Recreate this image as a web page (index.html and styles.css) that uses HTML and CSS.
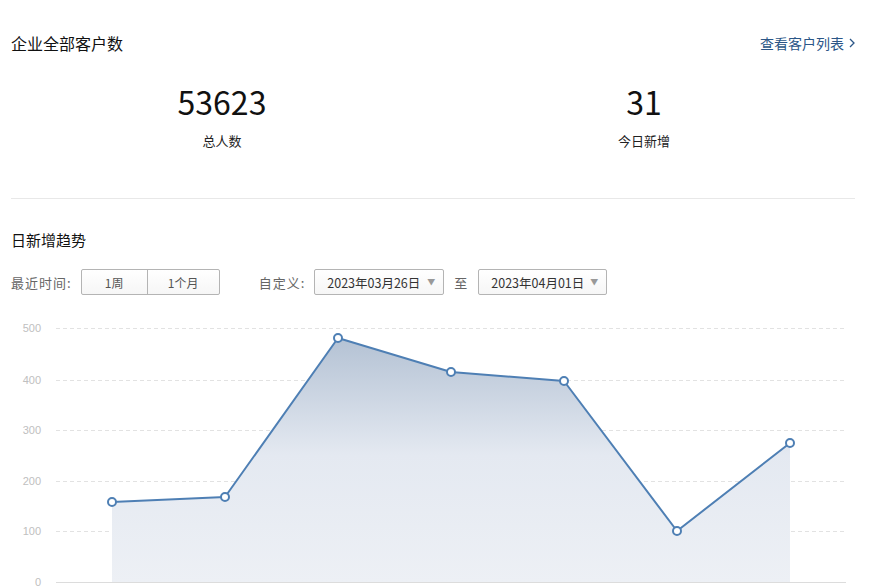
FILE: index.html
```html
<!DOCTYPE html>
<html lang="zh-CN">
<head>
<meta charset="utf-8">
<title>企业全部客户数</title>
<link rel="stylesheet" href="styles.css">
</head>
<body>
<div class="page">
  <div class="header">
    <div class="title">企业全部客户数</div>
    <a class="link" href="#">查看客户列表<svg class="chev" width="8" height="12" viewBox="0 0 8 12"><path d="M2 2 L6 6 L2 10" fill="none" stroke="#2b5687" stroke-width="1.3"/></svg></a>
  </div>
  <div class="stats">
    <div class="stat"><div class="num">53623</div><div class="lbl">总人数</div></div>
    <div class="stat"><div class="num">31</div><div class="lbl">今日新增</div></div>
  </div>
  <div class="divider"></div>
  <div class="sub">日新增趋势</div>
  <div class="filters">
    <span class="flabel">最近时间:</span>
    <div class="btns"><span class="btn b1">1周</span><span class="btn b2">1个月</span></div>
    <span class="flabel custom">自定义:</span>
    <div class="sel">2023年03月26日<span class="arr">▼</span></div>
    <span class="to">至</span>
    <div class="sel">2023年04月01日<span class="arr">▼</span></div>
  </div>
  <svg class="chart" width="844" height="272" viewBox="0 0 844 272">
    <defs>
      <linearGradient id="g" x1="0" y1="23" x2="0" y2="267" gradientUnits="userSpaceOnUse">
        <stop offset="0" stop-color="#b4c2d4"/>
        <stop offset="0.48" stop-color="#e4e9f1"/>
        <stop offset="1" stop-color="#edf0f5"/>
      </linearGradient>
    </defs>
    <g class="grid" stroke="#e2e2e2" stroke-dasharray="4 3" stroke-width="1">
      <line x1="45" y1="13.5" x2="835" y2="13.5"/>
      <line x1="45" y1="65.5" x2="835" y2="65.5"/>
      <line x1="45" y1="115.5" x2="835" y2="115.5"/>
      <line x1="45" y1="166.5" x2="835" y2="166.5"/>
      <line x1="45" y1="216.5" x2="835" y2="216.5"/>
    </g>
    <g class="ylab" font-size="11" fill="#c0c0c0" text-anchor="end">
      <text x="30" y="17">500</text>
      <text x="30" y="69">400</text>
      <text x="30" y="119">300</text>
      <text x="30" y="170">200</text>
      <text x="30" y="220">100</text>
      <text x="30" y="271">0</text>
    </g>
    <path d="M101 187 L214 182 L327 23 L440 57 L553 66 L666 216 L779 128 L779 267 L101 267 Z" fill="url(#g)"/>
    <line x1="45" y1="267.5" x2="835" y2="267.5" stroke="#dcdcdc" stroke-width="1"/>
    <polyline points="101,187 214,182 327,23 440,57 553,66 666,216 779,128" fill="none" stroke="#4e7fb4" stroke-width="2" stroke-linejoin="round"/>
    <g fill="#fff" stroke="#4e7fb4" stroke-width="2">
      <circle cx="101" cy="187" r="4"/>
      <circle cx="214" cy="182" r="4"/>
      <circle cx="327" cy="23" r="4"/>
      <circle cx="440" cy="57" r="4"/>
      <circle cx="553" cy="66" r="4"/>
      <circle cx="666" cy="216" r="4"/>
      <circle cx="779" cy="128" r="4"/>
    </g>
  </svg>
</div>
</body>
</html>
```

FILE: styles.css
```css
html, body {
  margin: 0;
  padding: 0;
  background: #fff;
}
body {
  font-family: "Noto Sans CJK SC", "Noto Sans", "Liberation Sans", sans-serif;
  color: #111;
  overflow: hidden;
}
.page {
  width: 844px;
  padding: 31px 22px 0 11px;
}
.header {
  display: flex;
  justify-content: space-between;
  align-items: center;
  height: 24px;
}
.title {
  font-size: 16px;
  line-height: 24px;
  color: #111;
}
.link {
  font-size: 14px;
  color: #2b5687;
  text-decoration: none;
  display: flex;
  align-items: center;
  gap: 4px;
  margin-right: -1px;
}
.chev {
  display: block;
}
.stats {
  display: grid;
  grid-template-columns: 1fr 1fr;
  margin-top: 26px;
}
.stat {
  display: flex;
  flex-direction: column;
  align-items: center;
}
.num {
  font-size: 32px;
  line-height: 40px;
  height: 40px;
  color: #111;
}
.lbl {
  margin-top: 10px;
  font-size: 13px;
  line-height: 20px;
  color: #222;
}
.divider {
  height: 1px;
  background: #e8e8e8;
  margin-top: 47px;
}
.sub {
  margin-top: 30px;
  font-size: 15px;
  line-height: 22px;
  color: #111;
}
.filters {
  display: flex;
  align-items: center;
  margin-top: 18px;
  height: 26px;
}
.flabel {
  font-size: 13px;
  letter-spacing: 1px;
  color: #666;
  margin-right: 9px;
}
.custom {
  margin-left: 39px;
  margin-right: 9px;
}
.btns {
  display: flex;
  height: 24px;
  border: 1px solid #b4b4b4;
  border-radius: 2px;
  background: linear-gradient(#fff, #f6f6f6);
}
.btn {
  font-size: 12px;
  color: #555;
  display: flex;
  align-items: center;
  justify-content: center;
}
.b1 {
  width: 65px;
  border-right: 1px solid #b4b4b4;
}
.b2 {
  width: 71px;
}
.sel {
  position: relative;
  box-sizing: border-box;
  width: 130px;
  height: 26px;
  border: 1px solid #b4b4b4;
  border-radius: 2px;
  background: linear-gradient(#fff, #f6f6f6);
  font-size: 12.5px;
  color: #333;
  display: flex;
  align-items: center;
  padding-left: 12px;
}
.sel + .to + .sel {
  width: 129px;
}
.arr {
  position: absolute;
  right: 8px;
  top: 6px;
  font-size: 8px;
  color: #999;
}
.to {
  font-size: 13px;
  color: #666;
  margin: 0 11px 0 10px;
}
.chart {
  display: block;
  margin-top: 20px;
  font-family: "Liberation Sans", "Noto Sans", sans-serif;
}
```
